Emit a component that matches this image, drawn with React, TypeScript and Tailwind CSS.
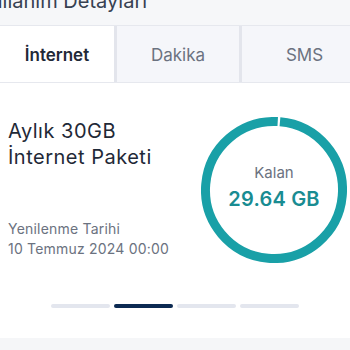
const tabs = [
  { label: "İnternet", active: true, width: "w-[114px]" },
  { label: "Dakika", active: false, width: "w-[125px]" },
  { label: "SMS", active: false, width: "w-[128px]" },
];

const RemainingRing = ({ value }: { value: string }) => {
  const r = 68.5;
  const c = 2 * Math.PI * r;
  return (
    <div className="relative w-[146px] h-[146px]">
      <svg width="146" height="146" viewBox="0 0 146 146">
        <circle
          cx="73"
          cy="73"
          r={r}
          fill="none"
          stroke="#19a0a7"
          strokeWidth="9"
          strokeDasharray={`${c - 3} ${c}`}
          transform="rotate(-85 73 73)"
        />
      </svg>
      <div className="absolute inset-0 flex flex-col items-center pt-[46px]">
        <span className="text-[15px] leading-[20px] text-[#6b7280]">Kalan</span>
        <span className="mt-[3px] text-[20px] leading-[26px] font-semibold text-[#198c92] tracking-[0.2px]">
          {value}
        </span>
      </div>
    </div>
  );
};

export default function App() {
  return (
    <div className="w-[350px] h-[350px] overflow-hidden bg-white font-['Inter',sans-serif] flex flex-col">
      <div className="h-[25px] bg-[#f6f7f9] shrink-0">
        <div className="-mt-[9px] -ml-[22px] text-[20px] leading-[20px] text-[#374151] whitespace-nowrap">
          Kullanım Detayları
        </div>
      </div>

      <div className="flex h-[58px] shrink-0 border-y border-[#e6e8ee] bg-[#f5f6fa] overflow-hidden">
        {tabs.map((tab, i) => (
          <div key={tab.label} className={`flex shrink-0 ${tab.width}`}>
            {i > 0 && <div className="w-[3px] bg-[#e3e5ec]" />}
            <div
              className={`flex-1 flex items-center justify-center pt-[4px] text-[17px] ${
                tab.active ? "bg-white font-semibold text-[#1f2937]" : "text-[#6b7280]"
              }`}
            >
              {tab.label}
            </div>
          </div>
        ))}
      </div>

      <div className="flex-1 bg-white flex flex-col">
        <div className="flex justify-between pl-[8px] pr-[3px] pt-[34px]">
          <div className="pt-[1px]">
            <div className="text-[20px] leading-[26px] text-[#1f2937] tracking-[0.5px]">
              Aylık 30GB
              <br />
              İnternet Paketi
            </div>
            <div className="mt-[49px] text-[14px] leading-[20px] text-[#6b7280] tracking-[0.2px]">
              Yenilenme Tarihi
              <br />
              10 Temmuz 2024 00:00
            </div>
          </div>
          <RemainingRing value="29.64 GB" />
        </div>

        <div className="flex justify-center gap-[4px] mt-[41px]">
          {[0, 1, 2, 3].map((i) => (
            <div
              key={i}
              className={`w-[59px] h-[4px] rounded-full ${i === 1 ? "bg-[#0c2a52]" : "bg-[#e3e6ee]"}`}
            />
          ))}
        </div>
      </div>

      <div className="h-[12px] bg-[#f5f6f8] shrink-0" />
    </div>
  );
}
